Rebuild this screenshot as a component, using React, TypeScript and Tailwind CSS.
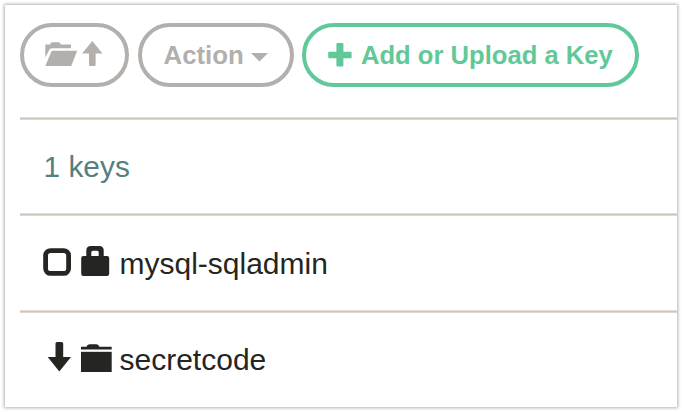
import type { ReactNode } from "react";

function FolderOpenUp() {
  return (
    <svg width="60" height="28" viewBox="0 0 60 28" fill="currentColor" className="block shrink-0">
      <path d="M0.3 16.500V3.500H5L6 1.800Q6.300 1.300 7 1.300H13.500Q14.500 1.300 15 2L15.800 3.500H26V7.200H6.500L4.600 8.300Z" />
      <path d="M6.800 9.800H32.2L26.2 25H0.3Z" />
      <path d="M47.3 0L57.5 12.4H50.6V24Q50.600 25 49.600 25H45Q44 25 44 24V12.4H37.1Z" />
    </svg>
  );
}

function Plus() {
  return (
    <svg width="24" height="24" viewBox="0 0 24 24" fill="currentColor" className="mb-px block shrink-0">
      <rect x="8.4" y="0" width="7" height="23.6" rx="1" />
      <rect x="0.2" y="8.8" width="23.4" height="6.4" rx="1" />
    </svg>
  );
}

function Checkbox() {
  return (
    <svg width="28" height="28" viewBox="0 0 28 28" fill="none" stroke="currentColor" className="block">
      <rect x="2.6" y="2.6" width="23" height="22.8" rx="5" strokeWidth="4.8" />
    </svg>
  );
}

function Lock() {
  return (
    <svg width="32" height="31" viewBox="0 0 32 31" fill="currentColor" className="block">
      <path
        fillRule="evenodd"
        d="M5.300 10V4.500Q5.300 0 9.800 0H18.200Q22.700 0 22.700 4.500V10H26Q28.200 10 28.200 12.200V27.800Q28.200 30 26 30H2.400Q0.200 30 0.200 27.800V12.200Q0.200 10 2.400 10ZM10.300 10H17.700V6.300Q17.700 4.800 16.200 4.800H11.800Q10.300 4.800 10.300 6.300Z"
      />
    </svg>
  );
}

function ArrowDown() {
  return (
    <svg width="28" height="30" viewBox="0 0 28 30" fill="currentColor" className="block">
      <path d="M14 0H18.400Q20.200 0 20.200 1.500V15H28L16.300 29.500L4.700 15H12.500V1.500Q12.500 0 14 0Z" />
    </svg>
  );
}

function Folder() {
  return (
    <svg width="32" height="30" viewBox="0 0 32 30" fill="currentColor" className="block">
      <path d="M0 2.800H5.500Q6.200 0.200 8.500 0.200H15.500Q17.800 0.200 18.300 2.800H30.700V5.500H0Z" />
      <rect x="0" y="7.800" width="30.700" height="20.200" />
    </svg>
  );
}

interface RowProps {
  label: string;
  mark: ReactNode;
  kind: ReactNode;
  height: string;
  markClass: string;
  kindClass: string;
  labelClass: string;
}

const rule = "border-t border-[#cfc6bb] shadow-[0_-1px_0_#e4ddd5,inset_0_1px_0_#dfd7cd]";

function Row({ label, mark, kind, height, markClass, kindClass, labelClass }: RowProps) {
  return (
    <li className={`flex items-center pl-[23px] text-[#252521] ${rule} ${height}`}>
      <span className={`w-7 shrink-0 ${markClass}`}>{mark}</span>
      <span className={`ml-2.5 w-8 shrink-0 ${kindClass}`}>{kind}</span>
      <span className={`ml-[7px] text-[30px] leading-[34px] ${labelClass}`}>{label}</span>
    </li>
  );
}

export default function App() {
  return (
    <div className="h-[412px] w-[682px] bg-white p-[5px] font-['Liberation_Sans',Arial,sans-serif]">
      <main className="h-[402px] w-[672px] bg-white pl-[14.500px] pt-[18px] shadow-[0_0_3px_1px_rgba(0,0,0,0.3)]">
        <div className="flex h-16 text-[25.800px] font-bold leading-[30px]">
          <button className="flex h-16 w-[109.500px] items-center rounded-full border-4 border-[#b3afac] pl-[21.500px] text-[#b3afac]">
            <FolderOpenUp />
          </button>
          <button className="ml-[8.500px] flex h-16 w-[156.500px] items-center rounded-full border-4 border-[#b3afac] pl-[22px] text-[#b3afac]">
            <span>Action</span>
            <svg width="17" height="9" viewBox="0 0 17 9" fill="currentColor" className="ml-[7px] mt-1 block">
              <path d="M0 0H17L8.500 8.600Z" />
            </svg>
          </button>
          <button className="ml-2 flex h-16 w-[337px] items-center rounded-full border-4 border-[#61c899] pl-[22px] text-[#61c899]">
            <Plus />
            <span className="ml-[9px] whitespace-nowrap text-[25.600px]">Add or Upload a Key</span>
          </button>
        </div>
        <ul className="mt-[31px]">
          <li className={`flex h-24 items-center pl-6 pt-[2px] text-[29.900px] text-[#54817f] ${rule}`}>
            <span>1 keys</span>
          </li>
          <Row
            label="mysql-sqladmin"
            mark={<Checkbox />}
            kind={<Lock />}
            height="h-[97px]"
            markClass="pb-[2px]"
            kindClass="pb-[3px]"
            labelClass="pt-px"
          />
          <Row
            label="secretcode"
            mark={<ArrowDown />}
            kind={<Folder />}
            height="h-[94px]"
            markClass="pb-[3px]"
            kindClass="pb-0"
            labelClass="pt-[3px]"
          />
        </ul>
      </main>
    </div>
  );
}
